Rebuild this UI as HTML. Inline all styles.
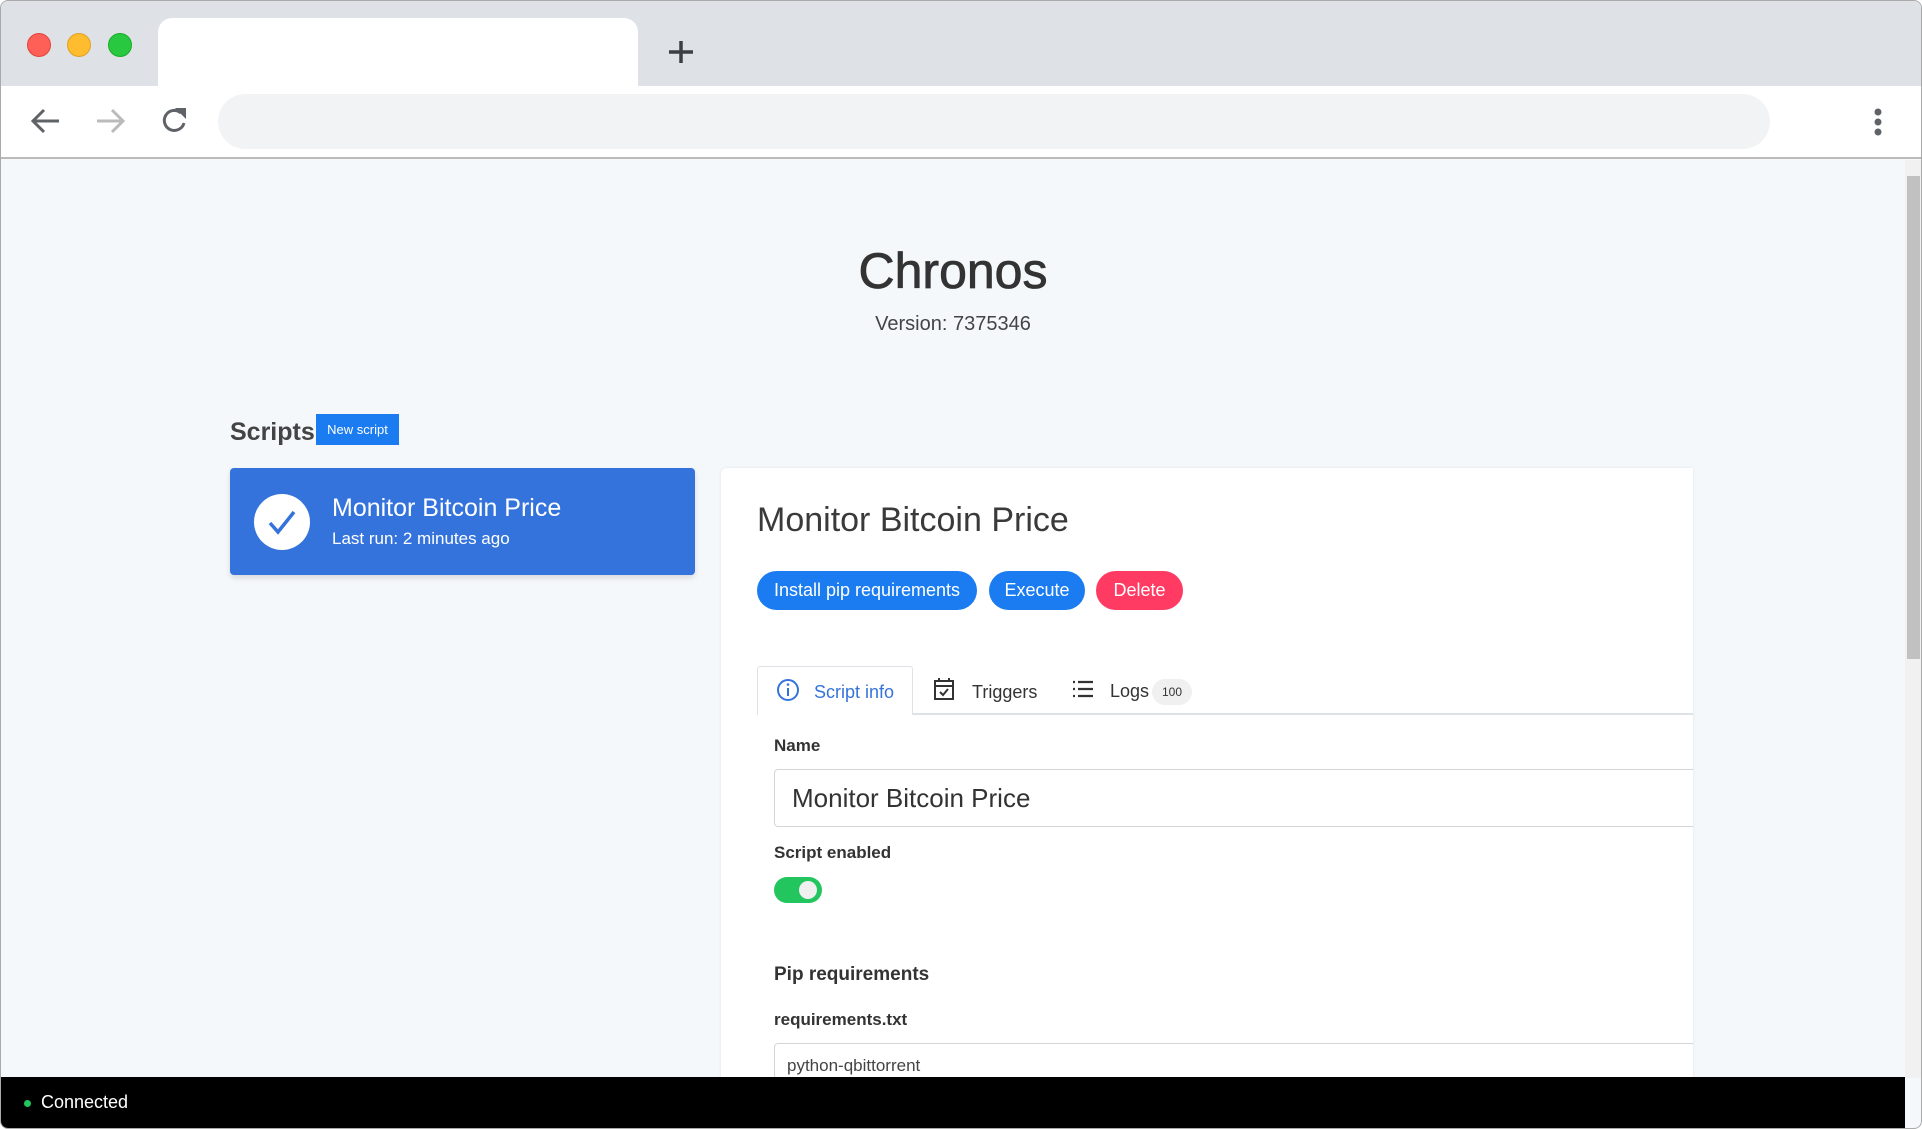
<!DOCTYPE html>
<html><head><style>
*{box-sizing:border-box;margin:0;padding:0}
body{width:1922px;height:1129px;overflow:hidden;background:#fff;font-family:"Liberation Sans",sans-serif;color:#333;position:relative}
.win{position:absolute;left:0;top:0;width:1922px;height:1129px;border:1px solid #aaa;border-radius:8px;overflow:hidden;background:#f5f8fb}
.tabbar{position:absolute;left:0;top:0;width:100%;height:85px;background:#dee1e6}
.tab{position:absolute;left:157px;top:17px;width:480px;height:70px;background:#fff;border-radius:14px 14px 0 0}
.dot{position:absolute;top:32px;width:24px;height:24px;border-radius:50%}
.toolbar{position:absolute;left:0;top:85px;width:100%;height:73px;background:#fff;border-bottom:2px solid #bbb}
.addr{position:absolute;left:217px;top:8px;width:1552px;height:55px;background:#f1f3f4;border-radius:28px}
.abs{position:absolute}
.btn{position:absolute;top:570px;height:39px;border-radius:20px;color:#fff;font-size:18px;line-height:39px;text-align:center}
</style></head><body><div class="win">
<div class="tabbar">
<div class="dot" style="left:26px;background:#fe5f57;border:1px solid #e0443e"></div>
<div class="dot" style="left:66px;background:#febc2e;border:1px solid #dea123"></div>
<div class="dot" style="left:107px;background:#28c840;border:1px solid #1aab29"></div>
<div class="tab"></div>
<svg class="abs" style="left:666px;top:38px" width="28" height="26"><path d="M14 2V24M2 13H26" stroke="#3c4043" stroke-width="3.5"/></svg>
</div>
<div class="toolbar">
<svg class="abs" style="left:28px;top:20px" width="34" height="30"><path d="M30 15H5M15 4L4 15L15 26" stroke="#5f6368" stroke-width="3" fill="none"/></svg>
<svg class="abs" style="left:93px;top:20px" width="34" height="30"><path d="M3 15H28M18 4L29 15L18 26" stroke="#bbb" stroke-width="3" fill="none"/></svg>
<svg class="abs" style="left:158px;top:18px" width="32" height="34"><path d="M25 19A10 10 0 1 1 22 9" stroke="#5f6368" stroke-width="3" fill="none"/><path d="M16 4H27V15Z" fill="#5f6368"/></svg>
<div class="addr"></div>
<svg class="abs" style="left:1870px;top:20px" width="14" height="34"><circle cx="7" cy="6" r="3.5" fill="#5f6368"/><circle cx="7" cy="16" r="3.5" fill="#5f6368"/><circle cx="7" cy="26" r="3.5" fill="#5f6368"/></svg>
</div>
<div class="abs" style="left:1904px;top:159px;width:18px;height:918px;background:#f1f1f1"></div>
<div class="abs" style="left:1906px;top:175px;width:13px;height:483px;background:#c1c1c1"></div>
<div class="abs" style="left:0;top:240px;width:1904px;text-align:center;font-size:50px;line-height:60px;color:#333;-webkit-text-stroke:0.8px #333">Chronos</div>
<div class="abs" style="left:0;top:312px;width:1904px;text-align:center;font-size:20px;color:#444">Version: 7375346</div>
<div class="abs" style="left:229px;top:417px;font-size:25px;font-weight:bold;color:#444">Scripts</div>
<div class="abs" style="left:315px;top:413px;width:83px;height:31px;background:#1a7cf0;color:#fff;font-size:13px;line-height:31px;text-align:center">New script</div>
<div class="abs" style="left:229px;top:467px;width:465px;height:107px;background:#3573dc;border-radius:4px;box-shadow:0 3px 6px rgba(0,0,0,.12)"></div>
<div class="abs" style="left:253px;top:493px;width:56px;height:56px;border-radius:50%;background:#fff"></div>
<svg class="abs" style="left:265px;top:506px" width="32" height="30"><path d="M4 16L12 25L28 5" stroke="#3573dc" stroke-width="3.5" fill="none"/></svg>
<div class="abs" style="left:331px;top:493px;font-size:25px;color:#fff">Monitor Bitcoin Price</div>
<div class="abs" style="left:331px;top:528px;font-size:17px;color:#fff">Last run: 2 minutes ago</div>
<div class="abs" style="left:720px;top:467px;width:972px;height:620px;background:#fff;border-radius:6px 0 0 0;box-shadow:0 0 3px rgba(0,0,0,.08);overflow:hidden">
<div class="abs" style="left:53px;top:301px;width:940px;height:58px;border:1px solid #d5d5d5;border-radius:4px;font-size:26px;line-height:56px;padding-left:17px;color:#333">Monitor Bitcoin Price</div>
<div class="abs" style="left:53px;top:575px;width:940px;height:60px;border:1px solid #d5d5d5;border-radius:4px;font-size:17px;padding:12px 0 0 12px;color:#444">python-qbittorrent</div>
</div>
<div class="abs" style="left:756px;top:500px;font-size:34px;color:#3a3a3a">Monitor Bitcoin Price</div>
<div class="btn" style="left:756px;width:220px;background:#1a7cf0">Install pip requirements</div>
<div class="btn" style="left:988px;width:96px;background:#1a7cf0">Execute</div>
<div class="btn" style="left:1095px;width:87px;background:#ff3b63">Delete</div>
<div class="abs" style="left:756px;top:712px;width:936px;height:2px;background:#dee2e6"></div>
<div class="abs" style="left:756px;top:665px;width:156px;height:49px;background:#fff;border:1px solid #dee2e6;border-bottom:none;border-radius:3px 3px 0 0"></div>
<svg class="abs" style="left:775px;top:677px" width="24" height="24"><circle cx="12" cy="12" r="10" stroke="#3573dc" stroke-width="2" fill="none"/><path d="M12 10V18" stroke="#3573dc" stroke-width="2"/><circle cx="12" cy="6.5" r="1.3" fill="#3573dc"/></svg>
<div class="abs" style="left:813px;top:681px;font-size:18px;color:#3573dc">Script info</div>
<svg class="abs" style="left:932px;top:676px" width="22" height="24"><rect x="2" y="4" width="18" height="18" stroke="#333" stroke-width="2" fill="none"/><path d="M2 9H20M6 1V5M16 1V5M7 15L10 18L15 12" stroke="#333" stroke-width="2" fill="none"/></svg>
<div class="abs" style="left:971px;top:681px;font-size:18px">Triggers</div>
<svg class="abs" style="left:1071px;top:679px" width="22" height="18"><path d="M1 2H3M1 9H3M1 16H3M6 2H21M6 9H21M6 16H21" stroke="#333" stroke-width="2.2"/></svg>
<div class="abs" style="left:1109px;top:680px;font-size:18px">Logs</div>
<div class="abs" style="left:1151px;top:678px;width:40px;height:26px;border-radius:13px;background:#f0f0f0;font-size:12px;line-height:26px;text-align:center">100</div>
<div class="abs" style="left:773px;top:735px;font-size:17px;font-weight:bold;color:#333">Name</div>
<div class="abs" style="left:773px;top:842px;font-size:17px;font-weight:bold;color:#333">Script enabled</div>
<div class="abs" style="left:773px;top:876px;width:48px;height:26px;border-radius:13px;background:#22c55e"></div>
<div class="abs" style="left:798px;top:880px;width:18px;height:18px;border-radius:50%;background:#f0f0f0"></div>
<div class="abs" style="left:773px;top:963px;font-size:19px;font-weight:bold;color:#333">Pip requirements</div>
<div class="abs" style="left:773px;top:1009px;font-size:17px;font-weight:bold;color:#333">requirements.txt</div>
<div class="abs" style="left:0;top:1076px;width:1904px;height:53px;background:#000"></div>
<div class="abs" style="left:23px;top:1099px;width:7px;height:7px;border-radius:50%;background:#22c55e"></div>
<div class="abs" style="left:40px;top:1091px;font-size:18px;color:#fff">Connected</div>
</div></body></html>
